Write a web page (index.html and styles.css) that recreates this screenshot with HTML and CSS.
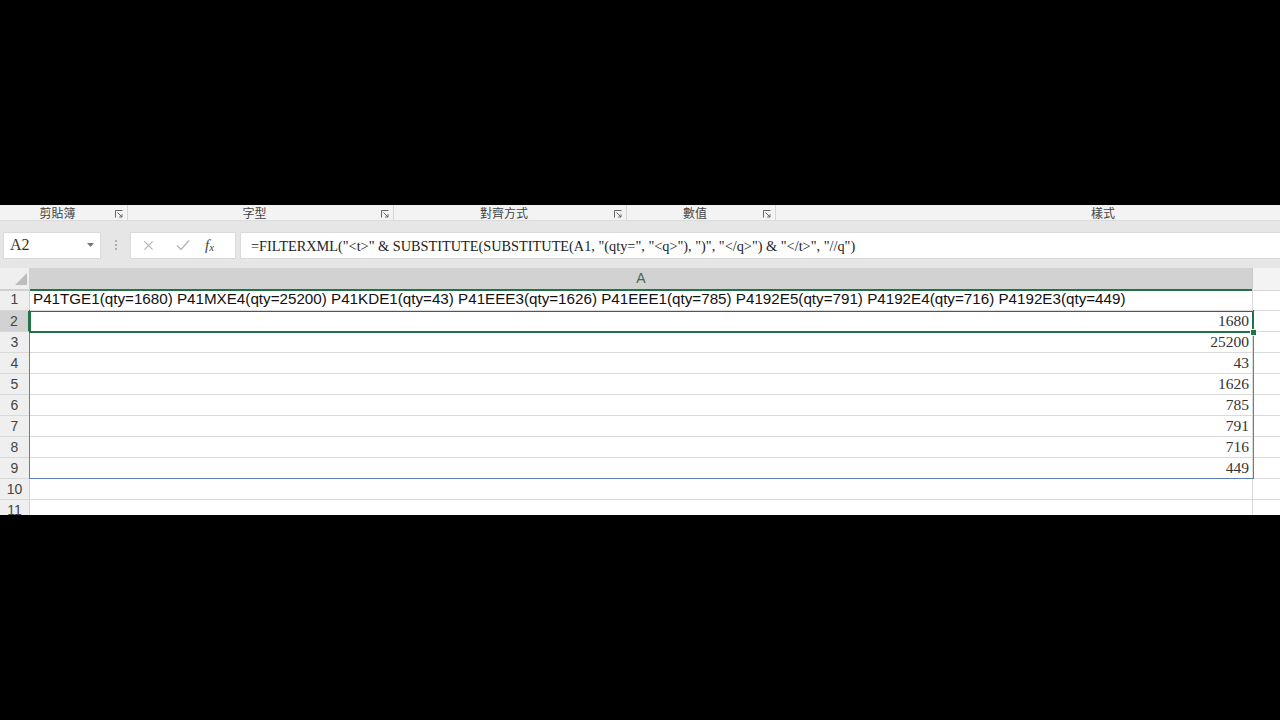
FILE: index.html
```html
<!DOCTYPE html>
<html>
<head>
<meta charset="utf-8">
<link rel="stylesheet" href="styles.css">
</head>
<body>
<div class="top-black"></div>
<div class="excel">
  <div class="ribbon-labels">
    <div class="group g1"><span class="glabel">剪貼簿</span><svg class="launcher" viewBox="0 0 8 8"><path d="M0.5 7.5V0.5H7.5" /><path d="M2.5 2.5L7 7M7 4.2V7H4.2" /></svg></div>
    <div class="group g2"><span class="glabel">字型</span><svg class="launcher" viewBox="0 0 8 8"><path d="M0.5 7.5V0.5H7.5" /><path d="M2.5 2.5L7 7M7 4.2V7H4.2" /></svg></div>
    <div class="group g3"><span class="glabel">對齊方式</span><svg class="launcher" viewBox="0 0 8 8"><path d="M0.5 7.5V0.5H7.5" /><path d="M2.5 2.5L7 7M7 4.2V7H4.2" /></svg></div>
    <div class="group g4"><span class="glabel">數值</span><svg class="launcher" viewBox="0 0 8 8"><path d="M0.5 7.5V0.5H7.5" /><path d="M2.5 2.5L7 7M7 4.2V7H4.2" /></svg></div>
    <div class="group g5"><span class="glabel">樣式</span></div>
  </div>
  <div class="formula-bar">
    <div class="namebox"><span class="name">A2</span><svg class="dd" viewBox="0 0 7 4"><path d="M0 0H7L3.5 4Z"/></svg></div>
    <div class="dots"><i></i><i></i><i></i></div>
    <div class="fbuttons">
      <svg class="fbtn" viewBox="0 0 12 12"><path d="M1.5 1.5L10.5 10.5M10.5 1.5L1.5 10.5"/></svg>
      <svg class="fbtn" viewBox="0 0 14 12"><path d="M1 6.5L5 10.5L13 1.5"/></svg>
      <span class="fx">f<sub>x</sub></span>
    </div>
    <div class="finput">=FILTERXML("&lt;t&gt;" &amp; SUBSTITUTE(SUBSTITUTE(A1, "(qty=", "&lt;q&gt;"), ")", "&lt;/q&gt;") &amp; "&lt;/t&gt;", "//q")</div>
  </div>
  <div class="sheet">
    <div class="row hdr">
      <div class="rh corner"><svg class="tri" viewBox="0 0 11 11"><path d="M11 0V11H0Z"/></svg></div>
      <div class="ch sel">A</div>
      <div class="ch rest"></div>
    </div>
    <div class="row r1"><div class="rh">1</div><div class="cell text">P41TGE1(qty=1680) P41MXE4(qty=25200) P41KDE1(qty=43) P41EEE3(qty=1626) P41EEE1(qty=785) P4192E5(qty=791) P4192E4(qty=716) P4192E3(qty=449)</div><div class="cell rest"></div></div>
    <div class="row"><div class="rh active">2</div><div class="cell num">1680</div><div class="cell rest"></div></div>
    <div class="row"><div class="rh">3</div><div class="cell num">25200</div><div class="cell rest"></div></div>
    <div class="row"><div class="rh">4</div><div class="cell num">43</div><div class="cell rest"></div></div>
    <div class="row"><div class="rh">5</div><div class="cell num">1626</div><div class="cell rest"></div></div>
    <div class="row"><div class="rh">6</div><div class="cell num">785</div><div class="cell rest"></div></div>
    <div class="row"><div class="rh">7</div><div class="cell num">791</div><div class="cell rest"></div></div>
    <div class="row"><div class="rh">8</div><div class="cell num">716</div><div class="cell rest"></div></div>
    <div class="row"><div class="rh">9</div><div class="cell num">449</div><div class="cell rest"></div></div>
    <div class="row"><div class="rh">10</div><div class="cell"></div><div class="cell rest"></div></div>
    <div class="row"><div class="rh">11</div><div class="cell"></div><div class="cell rest"></div></div>
    <div class="spill-range"></div>
    <div class="active-cell"><div class="handle"></div></div>
  </div>
</div>
</body>
</html>
```

FILE: styles.css
```css
* { box-sizing: border-box; }
html, body { margin: 0; padding: 0; background: #000; }
body { width: 1280px; height: 720px; overflow: hidden; font-family: "Liberation Sans", Arial, sans-serif; }
.top-black { height: 205px; }
.excel { height: 310px; overflow: hidden; background: #e6e6e6; position: relative; }

.ribbon-labels { display: flex; height: 16px; background: #f3f3f3; border-bottom: 1px solid #dcdcdc; overflow: hidden; }
.group { flex: none; display: flex; align-items: center; border-right: 1px solid #d6d6d6; height: 15px; }
.g1 { width: 128px; }
.g2 { width: 266px; }
.g3 { width: 233px; }
.g4 { width: 149px; }
.g5 { width: 654px; border-right: none; }
.glabel { flex: 1; text-align: center; font-family: "Noto Sans CJK TC", "Noto Sans CJK SC", sans-serif; font-size: 12px; color: #444; line-height: 15px; }
.launcher { width: 8px; height: 8px; margin-right: 4px; margin-top: 2px; fill: none; stroke: #666; stroke-width: 1; }

.formula-bar { display: flex; align-items: center; height: 28px; margin-top: 10px; padding: 0 0 0 3px; }
.namebox { width: 98px; height: 27px; background: #fff; border: 1px solid #dadada; display: flex; align-items: center; padding: 0 6px 0 6px; }
.name { flex: 1; font-family: "Liberation Serif", serif; font-size: 16px; color: #333; }
.dd { width: 7px; height: 4px; fill: #777; }
.dots { width: 29px; height: 27px; display: flex; flex-direction: column; align-items: center; justify-content: center; gap: 2px; }
.dots i { display: block; width: 2px; height: 2px; background: #b0b0b0; }
.fbuttons { width: 106px; height: 27px; background: #fff; border: 1px solid #dadada; display: flex; align-items: center; padding-left: 12px; gap: 0; }
.fbtn { fill: none; stroke: #b5b5b5; stroke-width: 1.3; }
.fbtn:nth-child(1) { width: 11px; height: 11px; margin-right: 22px; }
.fbtn:nth-child(2) { width: 14px; height: 12px; margin-right: 15px; }
.fx { font-family: "Liberation Serif", serif; font-style: italic; font-size: 15px; color: #444; }
.fx sub { font-size: 11px; vertical-align: -1px; }
.finput { flex: 1; height: 27px; margin-left: 4px; background: #fff; border: 1px solid #dadada; border-right: none; font-family: "Liberation Serif", serif; font-size: 14.3px; color: #222; padding-left: 10px; line-height: 26px; white-space: nowrap; overflow: hidden; }

.sheet { position: relative; margin-top: 9px; background: #fff; }
.row { display: grid; grid-template-columns: 30px 1223px 1fr; height: 21px; }
.row.r1 { height: 22px; }
.rh { background: #efefef; border-right: 1px solid #d0d0d0; border-bottom: 1px solid #d8d8d8; font-size: 14px; color: #444; text-align: center; line-height: 20px; }
.rh.active { background: #d2d2d2; border-right: 2px solid #217346; color: #444; }
.corner { position: relative; background: #efefef; border-bottom: 2px solid #d0d0d0; }
.tri { position: absolute; right: 2px; bottom: 4px; width: 12px; height: 12px; fill: #bdbdbd; }
.ch { border-right: 1px solid #c8c8c8; font-size: 14px; color: #444; text-align: center; line-height: 21px; }
.ch.sel { background: #d2d2d2; border-bottom: 2px solid #217346; color: #3d6b52; }
.ch.rest { background: #f3f3f3; border-bottom: 1px solid #d6d6d6; border-right: none; }
.cell { border-bottom: 1px solid #dadada; border-right: 1px solid #dadada; white-space: nowrap; overflow: visible; }
.cell.rest { border-right: none; }
.cell.text { font-family: "Liberation Sans", Arial, sans-serif; font-size: 15.2px; color: #111; padding-left: 3px; line-height: 20px; position: relative; z-index: 1; }
.cell.num { font-family: "Liberation Serif", serif; font-size: 15.5px; color: #333; text-align: right; padding-right: 3px; line-height: 20px; }

.spill-range { position: absolute; left: 29px; top: 43px; width: 1225px; height: 168px; border: 1px solid #5b80b2; pointer-events: none; }
.active-cell { position: absolute; left: 29px; top: 42px; width: 1225px; height: 23px; border: 2px solid #217346; }
.handle { position: absolute; right: -5px; bottom: -5px; width: 7px; height: 7px; background: #217346; border: 1px solid #fff; }
```
